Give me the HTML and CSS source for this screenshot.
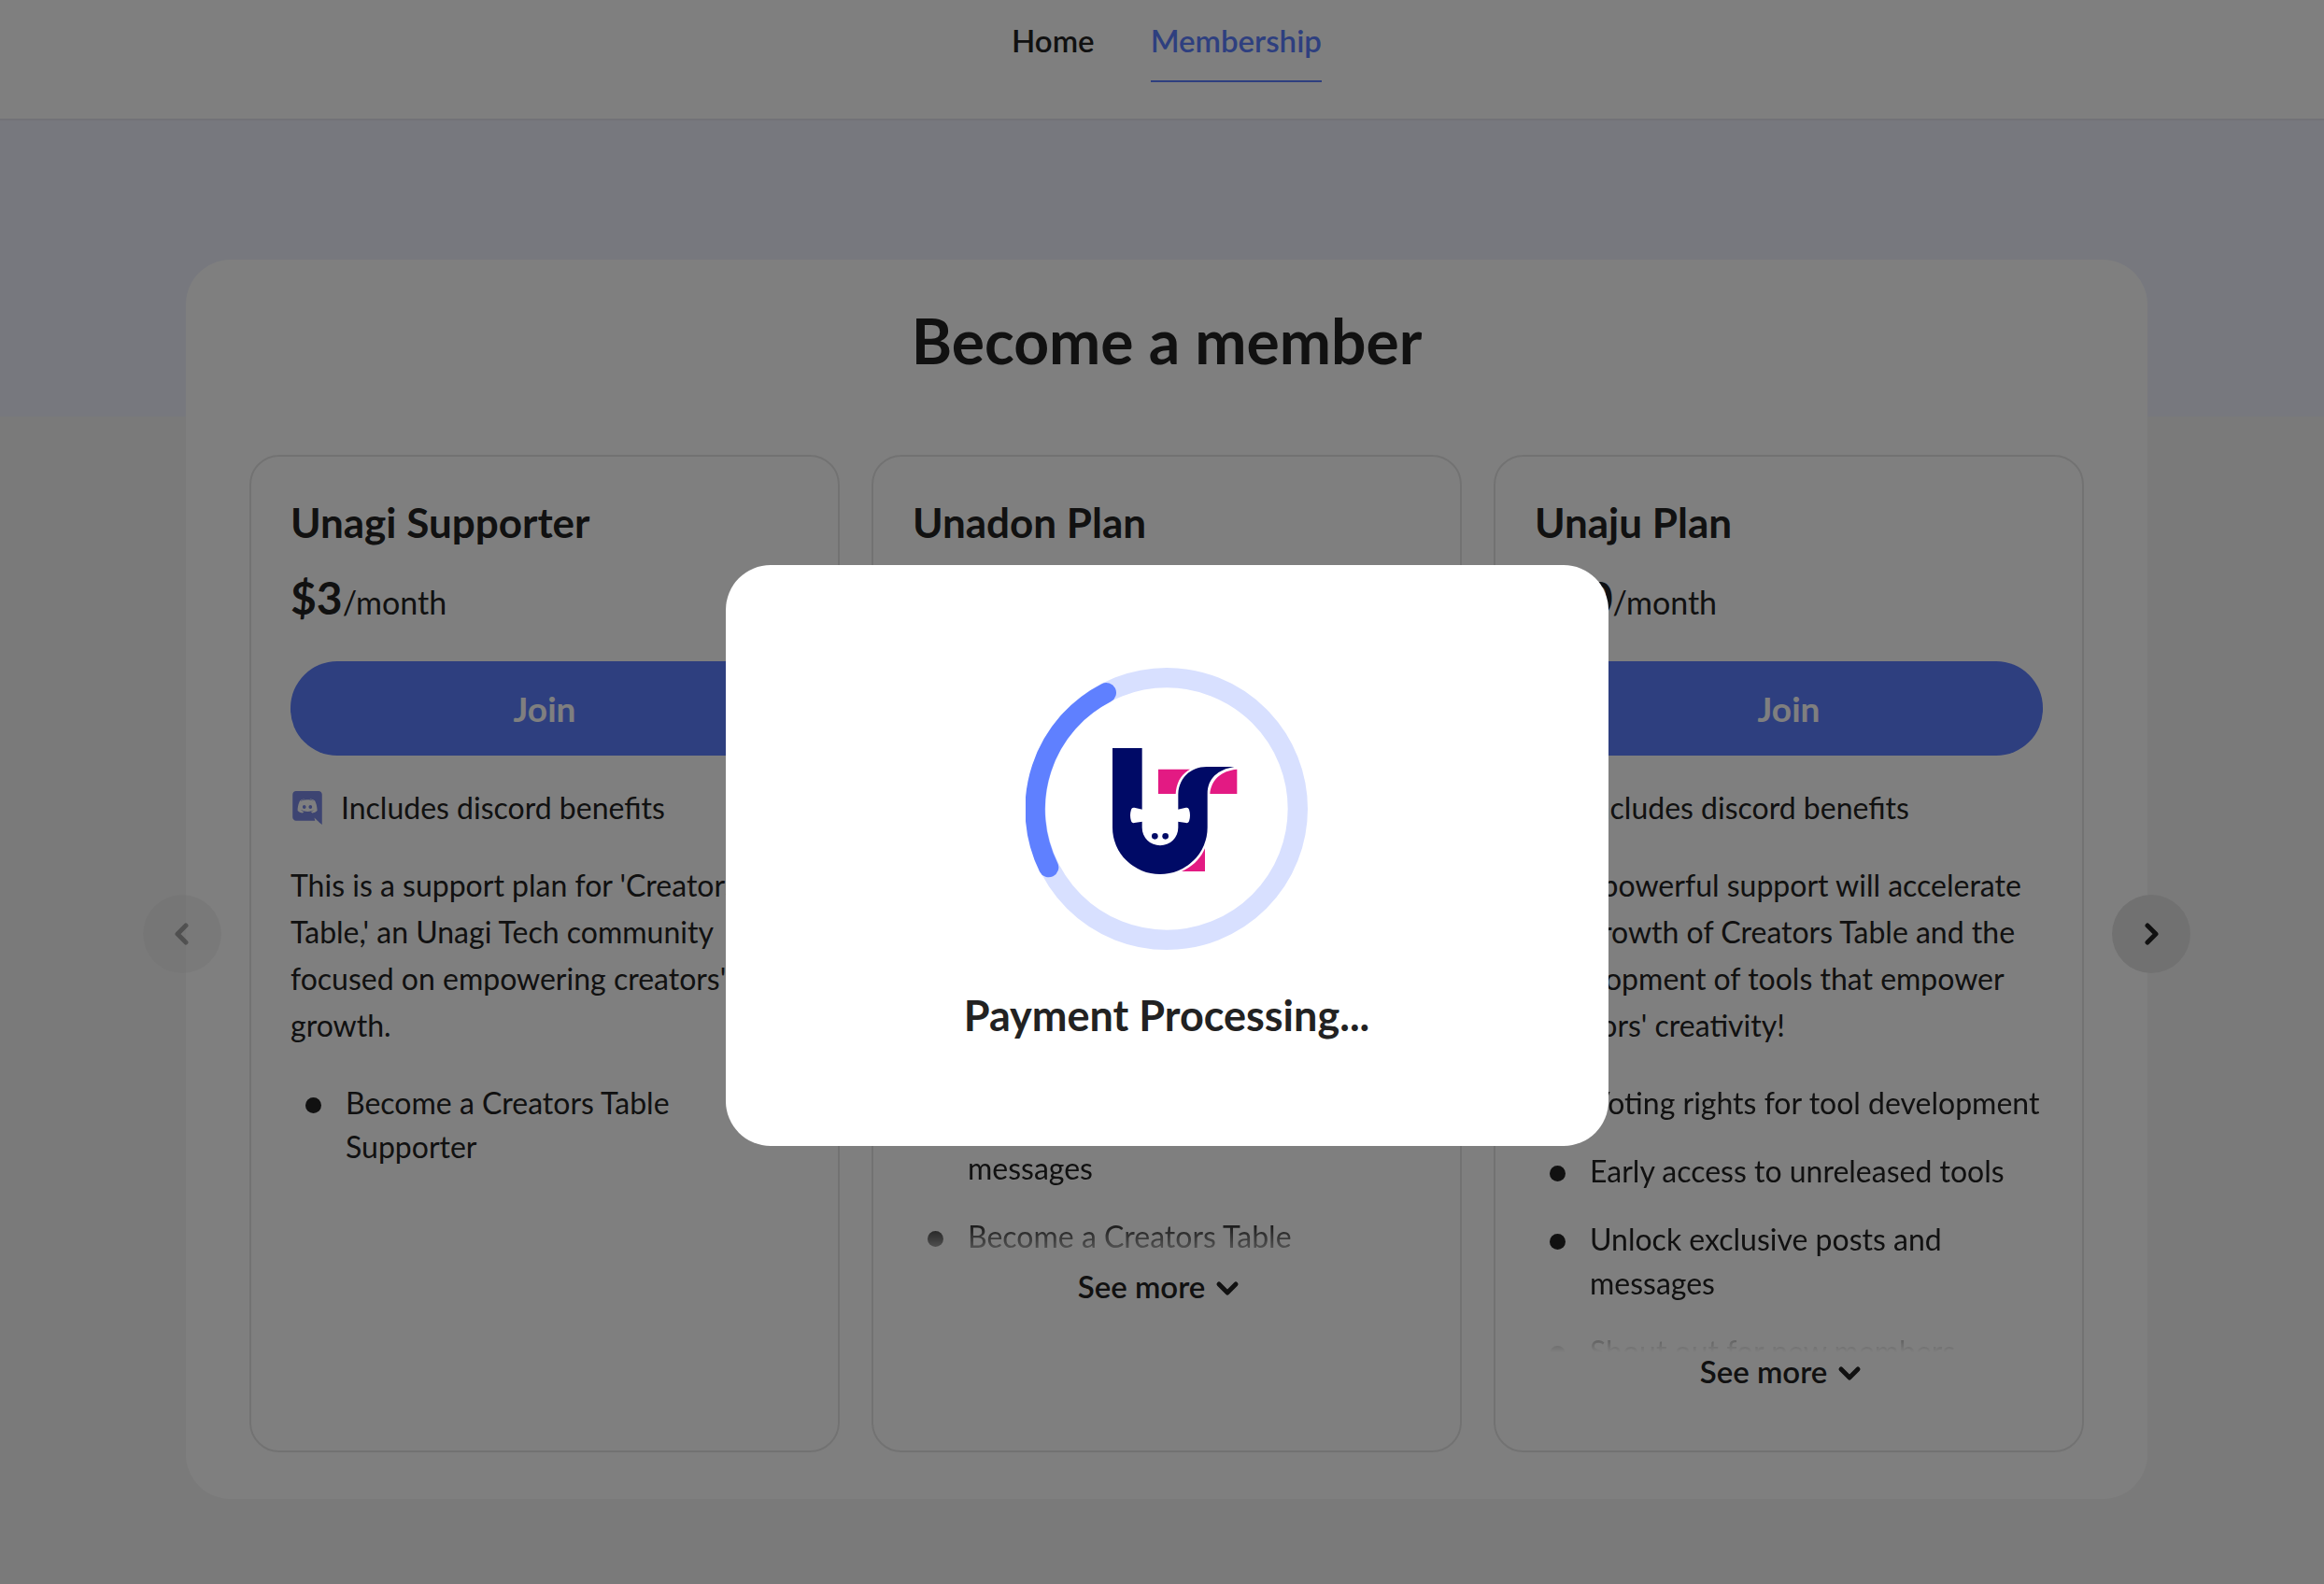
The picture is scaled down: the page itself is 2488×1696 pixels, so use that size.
FILE: index.html
```html
<!DOCTYPE html>
<html lang="en">
<head>
<meta charset="utf-8">
<meta name="viewport" content="width=device-width, initial-scale=1">
<title>Become a member</title>
<link rel="stylesheet" href="styles.css">
</head>
<body>
<svg class="sprite" aria-hidden="true">
  <symbol id="discord" viewBox="0 0 448 512">
    <path d="M297.216 243.2c0 15.616-11.52 28.416-26.112 28.416-14.336 0-26.112-12.8-26.112-28.416s11.52-28.416 26.112-28.416c14.592 0 26.112 12.8 26.112 28.416zm-119.552-28.416c-14.592 0-26.112 12.8-26.112 28.416s11.776 28.416 26.112 28.416c14.592 0 26.112-12.8 26.112-28.416.256-15.616-11.52-28.416-26.112-28.416zM448 52.736V512c-64.494-56.994-43.868-38.128-118.784-107.776l13.568 47.36H52.48C23.552 451.584 0 428.032 0 398.848V52.736C0 23.552 23.552 0 52.48 0h343.04C424.448 0 448 23.552 448 52.736zm-72.96 242.688c0-82.432-36.864-149.248-36.864-149.248-36.864-27.648-71.936-26.88-71.936-26.88l-3.584 4.096c43.52 13.312 63.744 32.512 63.744 32.512-60.811-33.329-132.244-33.335-191.232-7.424-9.472 4.352-15.104 7.424-15.104 7.424s21.248-20.224 67.328-33.536l-2.56-3.072s-35.072-.768-71.936 26.88c0 0-36.864 66.816-36.864 149.248 0 0 21.504 37.12 78.08 38.912 0 0 9.472-11.52 17.152-21.248-32.512-9.728-44.8-30.208-44.8-30.208 3.766 2.636 9.976 6.053 10.496 6.4 43.21 24.198 104.588 32.126 159.744 8.96 8.96-3.328 18.944-8.192 29.44-15.104 0 0-12.8 20.992-46.336 30.464 7.68 9.728 16.896 20.736 16.896 20.736 56.576-1.792 78.336-38.912 78.336-38.912z"/>
  </symbol>
  <symbol id="chevron-down" viewBox="0 6 48 40">
    <path d="M15 24l9 9 9-9" fill="none" stroke="currentColor" stroke-width="5" stroke-linecap="round" stroke-linejoin="round"/>
  </symbol>
  <symbol id="chevron-right" viewBox="0 0 24 24">
    <path d="M8 3l9 9-9 9" fill="none" stroke="currentColor" stroke-width="5" stroke-linecap="round" stroke-linejoin="round"/>
  </symbol>
</svg>

<header class="site-header">
  <nav class="tabs" aria-label="Page">
    <a class="tab" href="#home">Home</a>
    <a class="tab tab-active" href="#membership" aria-current="page">Membership</a>
  </nav>
</header>

<main class="page">
  <section class="panel">
    <h1 class="panel-title">Become a member</h1>
    <div class="carousel">
      <div class="plans">
        <article class="plan">
          <h2 class="plan-name">Unagi Supporter</h2>
          <p class="price"><strong class="amount">$3</strong>/month</p>
          <button class="join" type="button">Join</button>
          <p class="perk"><svg class="perk-icon" aria-hidden="true"><use href="#discord"/></svg>Includes discord benefits</p>
          <p class="about">This is a support plan for 'Creators Table,' an Unagi Tech community focused on empowering creators' growth.</p>
          <ul class="benefits">
            <li class="benefit">Become a Creators Table Supporter</li>
          </ul>
        </article>
        <article class="plan">
          <h2 class="plan-name">Unadon Plan</h2>
          <p class="price"><strong class="amount">$10</strong>/month</p>
          <button class="join" type="button">Join</button>
          <p class="perk"><svg class="perk-icon" aria-hidden="true"><use href="#discord"/></svg>Includes discord benefits</p>
          <p class="about">This plan helps us keep building Creators Table and share our progress with the whole community.</p>
          <ul class="benefits benefits-short">
            <li class="benefit">Early access to new tools</li>
            <li class="benefit">Unlock exclusive posts and messages</li>
            <li class="benefit">Become a Creators Table Supporter</li>
          </ul>
          <button class="more" type="button">See more<svg class="more-icon" aria-hidden="true"><use href="#chevron-down"/></svg></button>
        </article>
        <article class="plan">
          <h2 class="plan-name">Unaju Plan</h2>
          <p class="price"><strong class="amount">$30</strong>/month</p>
          <button class="join" type="button">Join</button>
          <p class="perk"><svg class="perk-icon" aria-hidden="true"><use href="#discord"/></svg>Includes discord benefits</p>
          <p class="about">Your powerful support will accelerate the growth of Creators Table and the development of tools that empower creators' creativity!</p>
          <ul class="benefits benefits-long">
            <li class="benefit">Voting rights for tool development</li>
            <li class="benefit">Early access to unreleased tools</li>
            <li class="benefit">Unlock exclusive posts and messages</li>
            <li class="benefit">Shout out for new members</li>
          </ul>
          <button class="more" type="button">See more<svg class="more-icon" aria-hidden="true"><use href="#chevron-down"/></svg></button>
        </article>
      </div>
      <button class="arrow arrow-prev" type="button" aria-label="Previous plans" disabled><svg class="arrow-icon" aria-hidden="true"><use href="#chevron-right"/></svg></button>
      <button class="arrow arrow-next" type="button" aria-label="Next plans"><svg class="arrow-icon" aria-hidden="true"><use href="#chevron-right"/></svg></button>
    </div>
  </section>
</main>

<div class="overlay">
  <div class="dialog" role="dialog" aria-modal="true" aria-labelledby="status">
    <svg class="spinner" viewBox="114 75 906 906" aria-hidden="true">
      <circle cx="567" cy="528" r="421" fill="none" stroke="#d8e0ff" stroke-width="64"/>
      <path d="M373 155A421 421 0 0 0 188 716" fill="none" stroke="#5f80ff" stroke-width="64" stroke-linecap="round"/>
      <path fill="#e31a83" d="M540 401H642C612 418 598 445 596 480H540zM793 401V480H706C710 435 742 405 793 401zM690 655V729H615C648 715 675 690 690 655z"/>
      <path fill="#000a66" d="M393 333H488V588a58 58 0 0 0 116 0V480C606 428 645 393 695 393H784C732 402 698 430 698 480V588a152.5 150 0 0 1-305 0z"/>
      <path fill="#fff" d="M489 530L463 524Q455 523 453 530Q447 549 453 568Q455 575 463 573L489 569zM603 530L629 524Q637 523 639 530Q645 549 639 568Q637 575 629 573L603 569z"/>
      <circle cx="529" cy="616" r="10" fill="#000a66"/>
      <circle cx="563" cy="616" r="10" fill="#000a66"/>
    </svg>
    <p class="status" id="status">Payment Processing...</p>
  </div>
</div>
</body>
</html>
```
FILE: styles.css
```css
:root {
  --ink: #222;
  --brand: #5c7eff;
  --line: #e5e5e5;
  --gutter: 10px;
}

* {
  box-sizing: border-box;
}

body {
  margin: 0;
  min-height: 100vh;
  background: #f5f5f5;
  color: var(--ink);
  font: 400 32px/50px Lato, "Open Sans", sans-serif;
}

h1,
h2,
p,
ul {
  margin: 0;
  padding: 0;
}

button {
  border: 0;
  padding: 0;
  font-family: inherit;
  color: inherit;
  cursor: pointer;
}

.sprite {
  position: absolute;
  width: 0;
  height: 0;
}

.site-header {
  padding: 23px 0 39px var(--gutter);
  background: #fff;
  border-bottom: 2px solid #e4e5ee;
}

.tabs {
  display: flex;
  justify-content: center;
  gap: 60px;
}

.tab {
  padding-bottom: 23px;
  border-bottom: 2px solid transparent;
  color: inherit;
  font-size: 33px;
  font-weight: 600;
  line-height: 40px;
  text-decoration: none;
}

.tab-active {
  border-color: var(--brand);
  color: var(--brand);
}

.page {
  padding: 149px 0 90px var(--gutter);
  background: linear-gradient(#eef0fc, #eef0fc) top / 100% 317px no-repeat;
}

.panel {
  max-width: 2100px;
  margin: 0 auto;
  padding: 47px 68px 50px;
  border-radius: 48px;
  background: #fff;
}

.panel-title {
  margin-bottom: 82px;
  font-size: 66px;
  line-height: 80px;
  text-align: center;
}

.carousel {
  position: relative;
}

.plans {
  display: grid;
  grid-template-columns: repeat(3, 1fr);
  gap: 34px;
}

.plan {
  display: flex;
  flex-direction: column;
  padding: 44px 42px 65px;
  border: 2px solid var(--line);
  border-radius: 32px;
}

.plan-name {
  font-size: 44px;
  line-height: 52px;
}

.price {
  display: flex;
  align-items: baseline;
  height: 60px;
  margin-top: 25px;
  font-size: 34px;
  line-height: 60px;
}

.amount {
  font-size: 48px;
}

.join {
  height: 101px;
  margin-top: 38px;
  border-radius: 50px;
  background: var(--brand);
  color: #fff;
  font-size: 37px;
  font-weight: 700;
}

.perk {
  display: flex;
  align-items: center;
  gap: 20px;
  margin-top: 31px;
  padding-left: 2px;
}

.perk-icon {
  width: 32px;
  height: 36px;
  fill: #7a88e4;
}

.about {
  margin-top: 33px;
}

.benefits {
  display: grid;
  gap: 26px;
  align-content: start;
  margin-top: 34px;
  line-height: 47px;
  list-style: none;
}

.benefits-short,
.benefits-long {
  overflow: hidden;
  mask-image: linear-gradient(#000 calc(100% - 50px), transparent);
}

.benefits-short {
  height: 250px;
}

.benefits-long {
  height: 291px;
}

.benefit {
  display: flex;
  gap: 26px;
  padding-left: 16px;
}

.benefit::before {
  content: "";
  flex: none;
  width: 17px;
  height: 17px;
  margin-top: 18px;
  border-radius: 50%;
  background: currentColor;
}

.more {
  display: flex;
  align-items: center;
  align-self: center;
  padding-right: 6px;
  background: none;
  font-size: 33px;
  font-weight: 600;
  line-height: 40px;
}

.more-icon {
  width: 48px;
  height: 40px;
}

.arrow {
  position: absolute;
  top: 48%;
  display: grid;
  place-items: center;
  width: 84px;
  height: 84px;
  border-radius: 50%;
  background: #e3e3e3;
  transform: translateY(-50%);
}

.arrow-prev {
  left: -114px;
  opacity: 0.4;
  rotate: 180deg;
  transform: translateY(50%);
}

.arrow-next {
  right: -114px;
}

.arrow-icon {
  width: 24px;
  height: 24px;
}

.overlay {
  position: fixed;
  inset: 0;
  display: flex;
  align-items: center;
  justify-content: center;
  padding: 136px 0 0 var(--gutter);
  background: rgb(0 0 0 / 50%);
}

.dialog {
  display: flex;
  flex-direction: column;
  align-items: center;
  gap: 43px;
  width: 945px;
  max-width: 100%;
  padding: 110px 48px 113px;
  border-radius: 48px;
  background: #fff;
}

.spinner {
  width: 302px;
  height: 302px;
}

.status {
  font-size: 45px;
  font-weight: 700;
  line-height: 54px;
}
```
